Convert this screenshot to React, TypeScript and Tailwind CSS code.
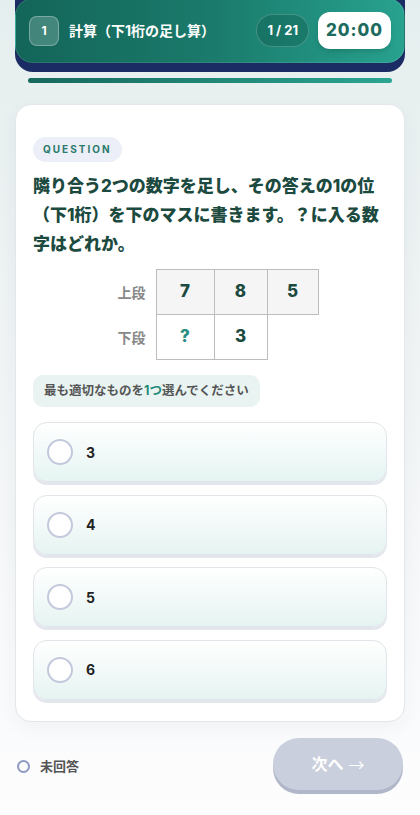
import React from 'react';

const options = ['3', '4', '5', '6'];

const font = { fontFamily: 'Inter, "Noto Sans CJK JP", sans-serif' };

const App = () => {
  return (
    <div
      className="w-[420px] min-h-[815px] bg-gradient-to-b from-[#e5eeee] via-[#f2f5f6] to-[#fdfdfe] px-[15px] pb-6"
      style={font}
    >
      {/* Header */}
      <div className="rounded-b-[18px] bg-[#1b2b63] pb-[9px] -mt-[2px]">
        <div className="flex items-center h-[65px] rounded-[18px] bg-gradient-to-r from-[#136559] via-[#1a7a6b] to-[#28a28f] px-[13px] border border-white/10">
          <div className="w-[30px] h-[30px] rounded-lg bg-white/20 border border-white/30 flex items-center justify-center text-white text-[12px] font-bold">
            1
          </div>
          <div className="ml-[10px] text-white text-[14px] font-bold flex-1">計算（下1桁の足し算）</div>
          <div className="h-[33px] px-[10px] rounded-full border border-white/20 bg-[#0f5c50]/40 flex items-center text-white text-[13px] font-bold">
            1 / 21
          </div>
          <div className="ml-[9px] h-[37px] w-[73px] rounded-xl bg-white flex items-center justify-center text-[#1d6b5e] text-[17px] font-extrabold tracking-[0.06em] shadow-md">
            20:00
          </div>
        </div>
      </div>

      {/* Progress */}
      <div className="mx-[13px] mt-[6px] h-[5px] rounded-full bg-gradient-to-r from-[#17695c] to-[#2ba592]" />

      {/* Card */}
      <div className="mt-[21px] bg-white rounded-[16px] border border-[#e3e6ea] shadow-[0_6px_20px_rgba(30,50,80,0.05)] px-[17px] pt-[30px] pb-[21px]">
        <div className="inline-flex items-center h-[25px] px-[10px] rounded-full bg-[#eceef8] text-[#2a7a6c] text-[10px] font-bold tracking-[0.2em]">
          QUESTION
        </div>
        <p className="mt-[10px] text-[17px] font-extrabold leading-[29px] text-[#1c4a3f]">
          隣り合う2つの数字を足し、その答えの1の位（下1桁）を下のマスに書きます。？に入る数字はどれか。
        </p>

        {/* Table */}
        <div className="mt-[10px] flex justify-center pl-[2px]">
          <div className="flex flex-col">
            <div className="flex items-center">
              <div className="w-[52px] pr-[10px] text-right text-[14px] font-bold text-[#888]">上段</div>
              <div className="flex border border-[#bcbcbc]">
                <div className="w-[57px] h-[44px] bg-[#f5f5f5] flex items-center justify-center text-[17px] font-extrabold text-[#1d4a3f]">7</div>
                <div className="w-[53px] h-[44px] bg-[#f5f5f5] border-l border-[#bcbcbc] flex items-center justify-center text-[17px] font-extrabold text-[#1d4a3f]">8</div>
                <div className="w-[51px] h-[44px] bg-[#f5f5f5] border-l border-[#bcbcbc] flex items-center justify-center text-[17px] font-extrabold text-[#1d4a3f]">5</div>
              </div>
            </div>
            <div className="flex items-center">
              <div className="w-[52px] pr-[10px] text-right text-[14px] font-bold text-[#888]">下段</div>
              <div className="flex border border-t-0 border-[#bcbcbc]">
                <div className="w-[57px] h-[44px] flex items-center justify-center text-[17px] font-extrabold text-[#2a8e80]">?</div>
                <div className="w-[53px] h-[44px] border-l border-[#bcbcbc] flex items-center justify-center text-[17px] font-extrabold text-[#1d4a3f]">3</div>
              </div>
            </div>
          </div>
        </div>

        <div className="mt-[15px] inline-flex items-center h-[32px] px-[11px] rounded-[10px] bg-[#e9f4f2] text-[12.5px] font-bold text-[#555]">
          最も適切なものを<span className="text-[#1f8a78]">1つ</span>選んでください
        </div>

        {/* Options */}
        <div className="mt-[15px] flex flex-col gap-[12.5px]">
          {options.map(o => (
            <div
              key={o}
              className="h-[60px] rounded-[14px] border border-[#e1e4e9] bg-gradient-to-b from-white to-[#e5f4f2] shadow-[0_3px_0_#e3e6ec] flex items-center px-[13px]"
            >
              <div className="w-[26px] h-[26px] rounded-full border-2 border-[#c3c8dc] bg-white" />
              <span className="ml-[13px] text-[14px] font-bold text-[#222]">{o}</span>
            </div>
          ))}
        </div>
      </div>

      {/* Footer */}
      <div className="mt-[16px] flex items-center justify-between">
        <div className="flex items-center pl-[2px] pt-[6px]">
          <div className="w-[13px] h-[13px] rounded-full border-2 border-[#8f9ac2]" />
          <span className="ml-[10px] text-[13px] font-bold text-[#555]">未回答</span>
        </div>
        <div className="w-[130px] h-[52px] rounded-full bg-[#c9cfdc] shadow-[0_4px_0_#b0b7c9] flex items-center justify-center text-white text-[16px] font-bold mr-[2px]">
          次へ <span className="ml-[5px] font-normal" style={{ fontFamily: '"Noto Sans CJK JP", sans-serif' }}>→</span>
        </div>
      </div>
    </div>
  );
};

export default App;
